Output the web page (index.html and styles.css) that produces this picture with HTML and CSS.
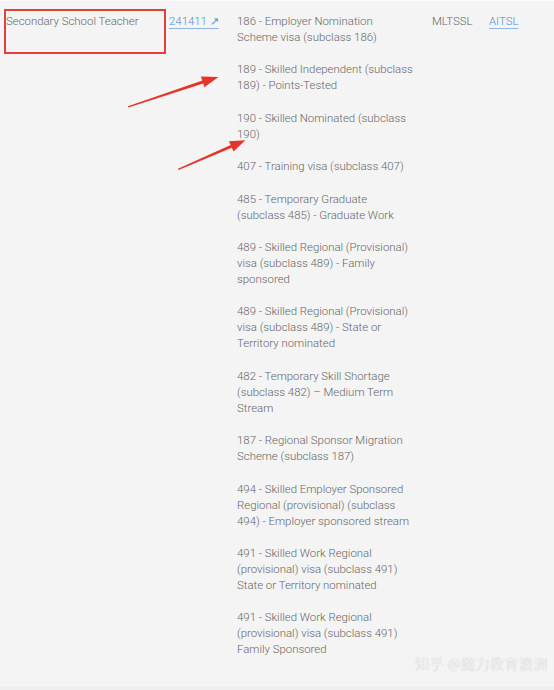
FILE: index.html
```html
<!DOCTYPE html>
<html>
<head>
<meta charset="utf-8">
<link rel="stylesheet" href="styles.css">
</head>
<body>
<div class="page">
  <div class="row">
    <div class="c-name">Secondary School Teacher</div>
    <div class="c-code"><a class="link" href="#">241411 <span class="ext">↗</span></a></div>
    <div class="c-visas">
      <p>186 - Employer Nomination Scheme visa (subclass 186)</p>
      <p>189 - Skilled Independent (subclass 189) - Points-Tested</p>
      <p>190 - Skilled Nominated (subclass 190)</p>
      <p>407 - Training visa (subclass 407)</p>
      <p>485 - Temporary Graduate (subclass 485) - Graduate Work</p>
      <p>489 - Skilled Regional (Provisional) visa (subclass 489) - Family sponsored</p>
      <p>489 - Skilled Regional (Provisional) visa (subclass 489) - State or Territory nominated</p>
      <p>482 - Temporary Skill Shortage (subclass 482) – Medium Term Stream</p>
      <p>187 - Regional Sponsor Migration Scheme (subclass 187)</p>
      <p>494 - Skilled Employer Sponsored Regional (provisional) (subclass 494) - Employer sponsored stream</p>
      <p>491 - Skilled Work Regional (provisional) visa (subclass 491) State or Territory nominated</p>
      <p>491 - Skilled Work Regional (provisional) visa (subclass 491) Family Sponsored</p>
    </div>
    <div class="c-list">MLTSSL</div>
    <div class="c-auth"><a class="link" href="#">AITSL</a></div>
  </div>
  <div class="redbox"></div>
  <svg class="arrows" width="554" height="690" viewBox="0 0 554 690">
    <polygon fill="#e8332a" points="128,105.2 202.3,79.4 200.8,75.4 218.5,76 204.3,86.2 203.3,82.4 128.4,106.6"/>
    <polygon fill="#e8332a" points="178,167.8 230.6,143.9 228.9,140.2 245.3,139.2 233.6,150.6 231.8,146.7 178.6,169"/>
  </svg>
  <div class="watermark">知乎 @魔力教育澳洲</div>
</div>
</body>
</html>
```
FILE: styles.css
```css
html, body {
  margin: 0;
  padding: 0;
  background: #f4f4f4;
}
.page {
  position: relative;
  width: 554px;
  height: 690px;
  overflow: hidden;
  box-sizing: border-box;
  border-top: 1px solid #fafafa;
  font-family: Roboto, "Noto Sans", sans-serif;
  font-weight: 300;
  font-size: 11.4px;
  line-height: 16px;
  color: #666;
}
.page::after {
  content: "";
  position: absolute;
  left: 0;
  right: 0;
  top: 684px;
  height: 6px;
  background: #efefef;
  border-top: 1px solid #f9f9f9;
}
.row {
  display: grid;
  grid-template-columns: 163px 68px 195px 57px 60px;
  padding: 12px 0 0 6px;
}
.c-visas p {
  margin: 0 0 16.4px 0;
  width: 178px;
}
.link {
  color: #4a8fd8;
  text-decoration: underline;
  text-decoration-color: #8db6e6;
  text-underline-offset: 3px;
}
.ext {
  font-size: 11px;
  font-weight: 400;
}
.redbox {
  position: absolute;
  left: 4px;
  top: 8px;
  width: 158px;
  height: 41px;
  border: 2px solid #e3403a;
}
.arrows {
  position: absolute;
  left: 0;
  top: 0;
}
.watermark {
  position: absolute;
  right: 6px;
  top: 652px;
  font-family: "Noto Sans CJK SC", sans-serif;
  font-weight: 300;
  font-size: 14px;
  line-height: 20px;
  color: #fafafa;
  text-shadow: 0 0 1px #aaa;
  letter-spacing: 0.5px;
}
```
